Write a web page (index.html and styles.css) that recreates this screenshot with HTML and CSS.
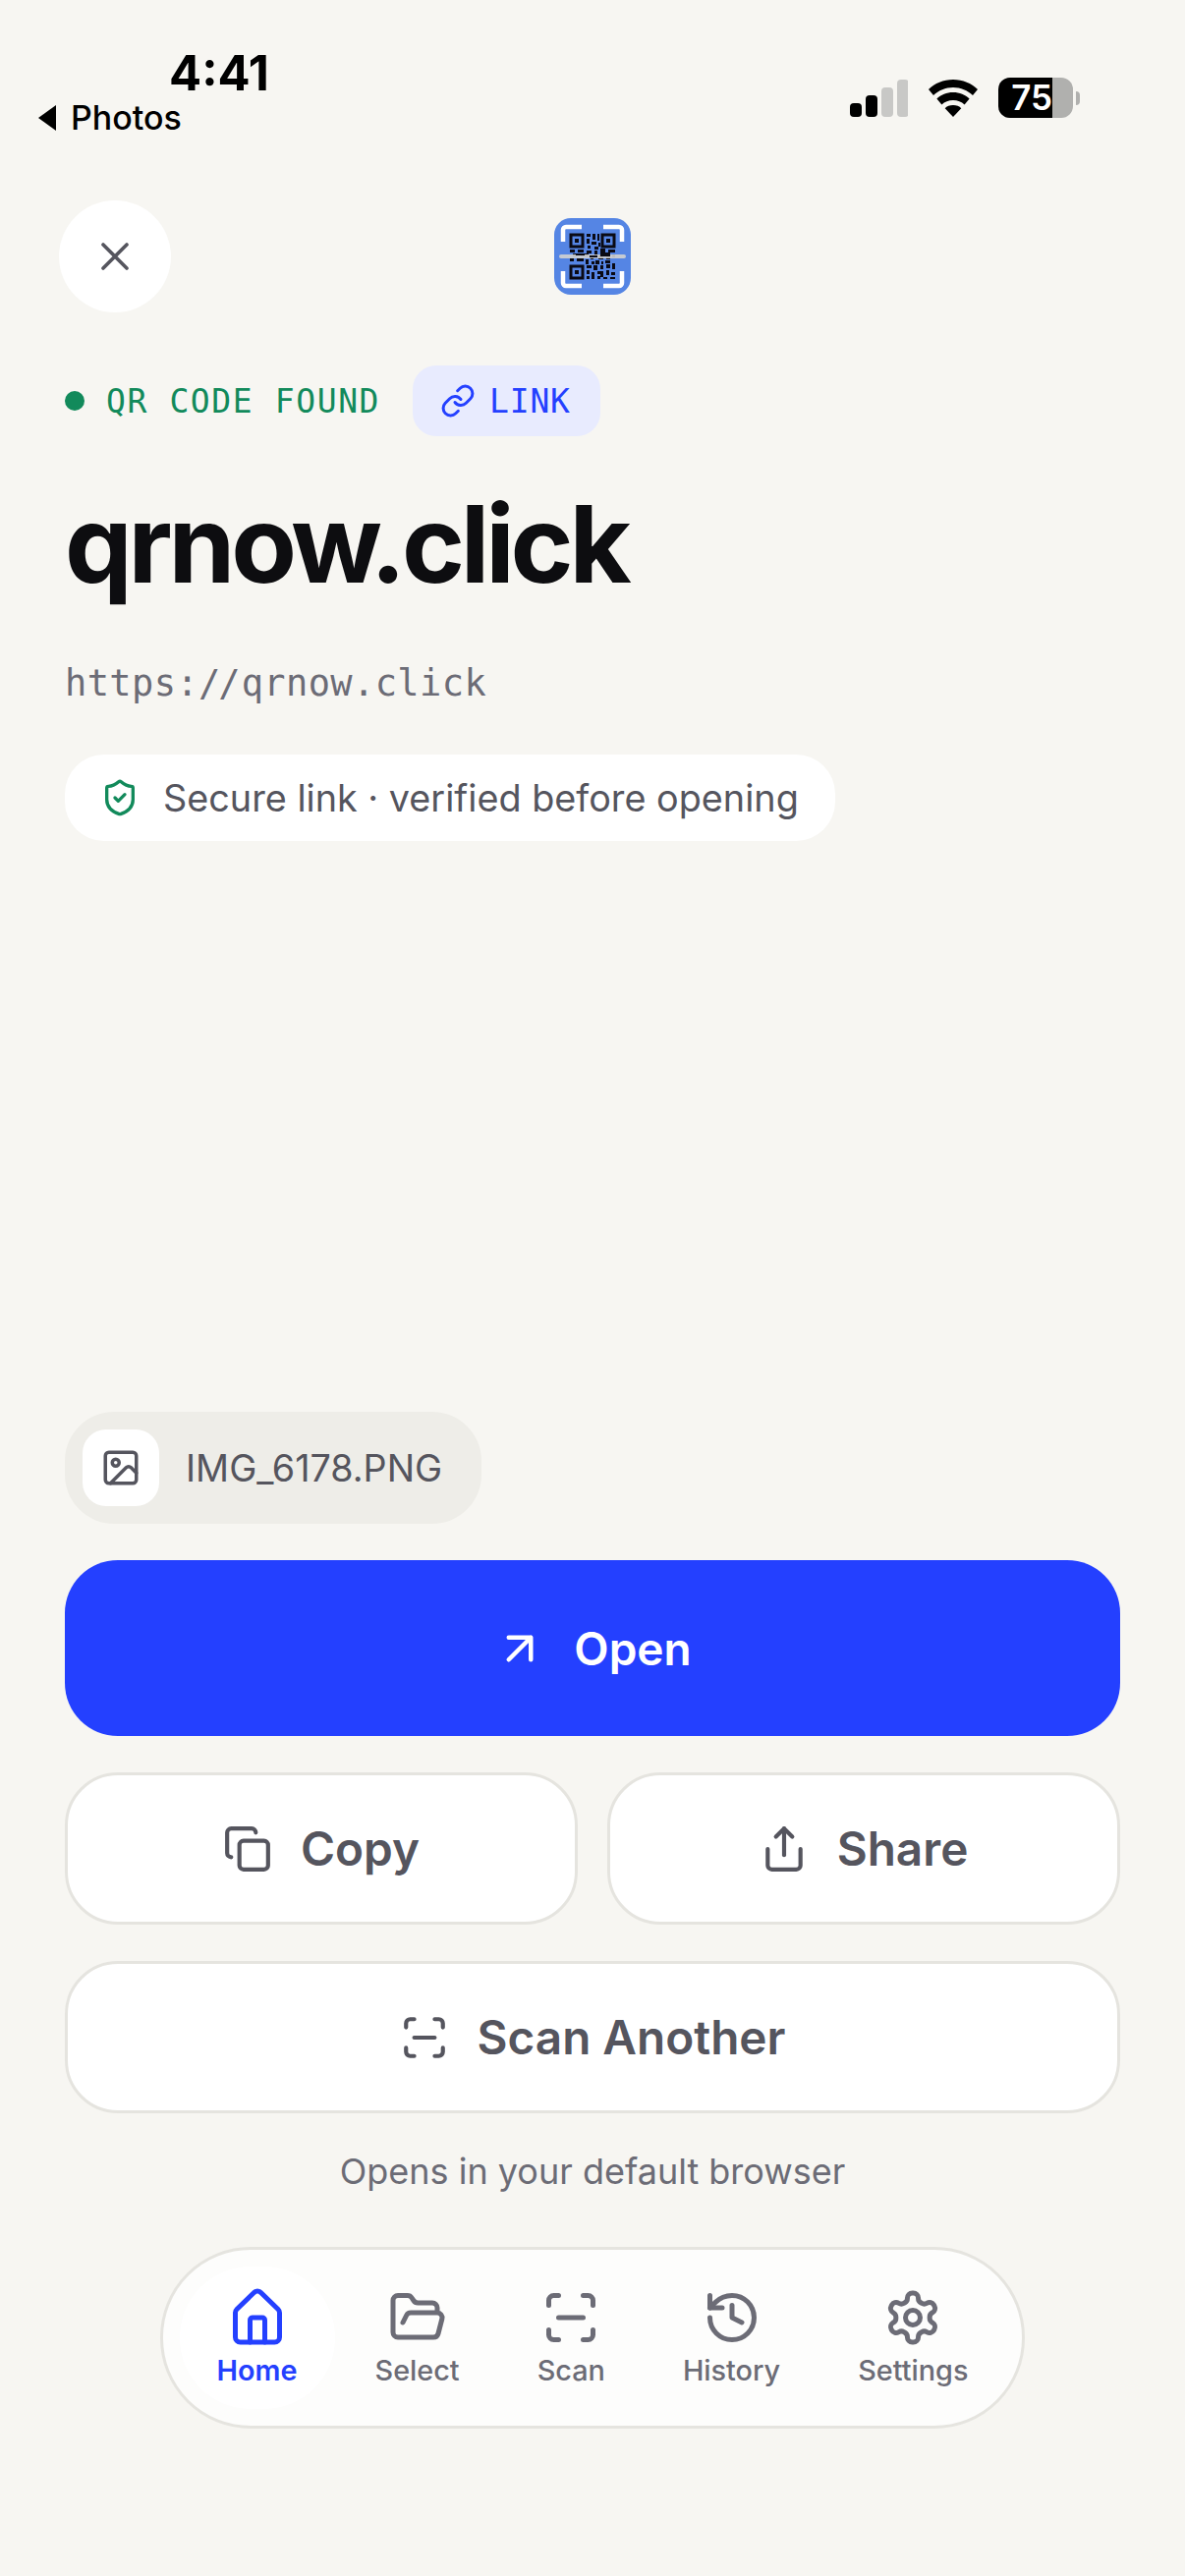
FILE: index.html
```html
<!DOCTYPE html>
<html lang="en">
<head>
<meta charset="utf-8">
<title>qrnow.click</title>
<link rel="stylesheet" href="styles.css">
</head>
<body>
<div class="page">
  <header class="status-bar">
    <div class="status-left">
      <div class="clock">4:41</div>
      <div class="back-app"><svg class="back-tri" viewBox="0 0 20 28"><path d="M19 1V27L1 14z"/></svg>Photos</div>
    </div>
    <div class="status-right">
      <svg class="signal" viewBox="0 0 60 38">
        <rect x="1" y="24" width="12" height="14" rx="4"/>
        <rect x="17" y="16" width="12" height="22" rx="4"/>
        <rect class="off" x="33" y="8" width="12" height="30" rx="4"/>
        <rect class="off" x="49" y="0" width="12" height="38" rx="4"/>
      </svg>
      <svg class="wifi" viewBox="0 0 52 38">
        <path d="M26 0C16 0 7.500 3.800 1 10l5 6c5.200-5 12.200-8 20-8s14.800 3 20 8l5-6C44.500 3.800 36 0 26 0z"/>
        <path d="M26 13c-6.600 0-12.400 2.500-16.600 6.500l5 6C17.400 22.500 21.500 21 26 21s8.600 1.500 11.600 4.500l5-6C38.400 15.500 32.600 13 26 13z"/>
        <path d="M26 26c-3.400 0-6.300 1.200-8.300 3.200L26 38l8.300-8.800C32.300 27.200 29.400 26 26 26z"/>
      </svg>
      <div class="battery">
        <div class="battery-body"><span class="battery-fill">75</span></div>
        <span class="battery-cap"></span>
      </div>
    </div>
  </header>

  <div class="top-row">
    <button class="close-btn" type="button">
      <svg class="ico ico-close" viewBox="0 0 24 24"><path d="M18 6 6 18M6 6l12 12"/></svg>
    </button>
    <svg class="app-logo" viewBox="0 0 78 78">
      <rect width="78" height="78" rx="17" fill="#5585e4"/>
      <g fill="none" stroke="#fff" stroke-width="4.500">
        <path d="M9 24V12a3 3 0 0 1 3-3h16M50 9h16a3 3 0 0 1 3 3v12M69 54v12a3 3 0 0 1-3 3H50M28 69H12a3 3 0 0 1-3-3V54"/>
      </g>
      <g fill="none" stroke="#0a0a14" stroke-width="3">
        <rect x="17" y="17" width="12" height="12"/>
        <rect x="49" y="17" width="12" height="12"/>
        <rect x="17" y="49" width="12" height="12"/>
      </g>
      <g fill="#0a0a14">
        <rect x="21" y="21" width="4" height="4"/><rect x="53" y="21" width="4" height="4"/><rect x="21" y="53" width="4" height="4"/>
        <path d="M33 16h4v3h-4zM39 16h3v6h-3zM44 16h2v7h-2zM33 21h3v5h-3zM38 24h5v3h-5zM45 25h2v4h-2zM34 28h3v3h-3zM41 29h4v3h-4zM16 32h5v3h-5zM24 32h6v3h-6zM33 33h5v3h-5zM41 33h3v5h-3zM47 31h5v4h-5zM55 32h7v3h-7zM19 36h4v3h-4zM27 36h8v3h-8zM37 38h3v4h-3zM45 37h5v5h-5zM53 36h4v6h-4zM59 37h3v3h-3zM16 41h4v3h-4zM23 41h7v3h-7zM32 42h3v5h-3zM38 44h3v3h-3zM42 43h4v4h-4zM48 44h2v3h-2zM52 43h5v3h-5zM33 48h5v3h-5zM40 48h4v5h-4zM47 48h3v4h-3zM53 47h4v4h-4zM59 46h3v6h-3zM33 53h3v4h-3zM38 55h3v7h-3zM44 54h6v3h-6zM53 53h3v5h-3zM58 55h4v3h-4zM44 59h3v3h-3zM50 60h4v2h-4zM57 60h5v2h-5zM33 59h3v3h-3zM47 57h3v3h-3z"/>
      </g>
      <rect x="5" y="37" width="68" height="4" rx="2" fill="#d2d2d0" opacity=".9"/>
      <path fill="#0a0a14" d="M22 36h9v2h-9zM36 38h8v2h-8zM47 35h10v4h-10z"/>
    </svg>
    <span></span>
  </div>

  <main class="result">
    <div class="badge-row">
      <span class="dot"></span>
      <span class="found">QR CODE FOUND</span>
      <span class="type-pill">
        <svg class="ico ico-link" viewBox="0 0 24 24"><path d="M10 13a5 5 0 0 0 7.540.54l3-3a5 5 0 0 0-7.070-7.070l-1.720 1.710"/><path d="M14 11a5 5 0 0 0-7.540-.54l-3 3a5 5 0 0 0 7.070 7.070l1.710-1.710"/></svg>
        LINK
      </span>
    </div>
    <h1 class="host">qrnow.click</h1>
    <div class="url">https:<span class="slashes">//</span>qrnow.click</div>
    <div class="secure">
      <svg class="ico ico-shield" viewBox="0 0 24 24"><path d="M20 13c0 5-3.500 7.500-7.660 8.950a1 1 0 0 1-.67-.01C7.500 20.500 4 18 4 13V6a1 1 0 0 1 1-1c2 0 4.500-1.200 6.240-2.720a1.170 1.170 0 0 1 1.520 0C14.510 3.810 17 5 19 5a1 1 0 0 1 1 1z"/><path d="m9 12 2 2 4-4"/></svg>
      Secure link · verified before opening
    </div>
  </main>

  <section class="actions">
    <div class="file-chip">
      <span class="file-thumb">
        <svg class="ico ico-image" viewBox="0 0 24 24"><rect x="3" y="3" width="18" height="18" rx="2"/><circle cx="9" cy="9" r="2"/><path d="m21 15-3.086-3.086a2 2 0 0 0-2.828 0L6 21"/></svg>
      </span>
      IMG_6178.PNG
    </div>
    <button class="btn btn-primary" type="button">
      <svg class="ico ico-open" viewBox="0 0 24 24"><path d="M7 7h10v10M7 17 17 7"/></svg>
      Open
    </button>
    <div class="btn-pair">
      <button class="btn btn-light" type="button">
        <svg class="ico ico-btn" viewBox="0 0 24 24"><rect x="8" y="8" width="14" height="14" rx="2"/><path d="M4 16c-1.100 0-2-.9-2-2V4c0-1.100.9-2 2-2h10c1.100 0 2 .9 2 2"/></svg>
        Copy
      </button>
      <button class="btn btn-light" type="button">
        <svg class="ico ico-btn" viewBox="0 0 24 24"><path d="M4 12v8a2 2 0 0 0 2 2h12a2 2 0 0 0 2-2v-8"/><path d="M16 6l-4-4-4 4"/><path d="M12 2v13"/></svg>
        Share
      </button>
    </div>
    <button class="btn btn-light" type="button">
      <svg class="ico ico-btn" viewBox="0 0 24 24"><path d="M3 7V5a2 2 0 0 1 2-2h2M17 3h2a2 2 0 0 1 2 2v2M21 17v2a2 2 0 0 1-2 2h-2M7 21H5a2 2 0 0 1-2-2v-2M7 12h10"/></svg>
      Scan Another
    </button>
    <p class="hint">Opens in your default browser</p>
  </section>

  <nav class="tabbar">
    <a class="tab tab-active">
      <svg class="ico ico-tab" viewBox="0 0 24 24"><path d="M3 10a2 2 0 0 1 .6-1.400l6.900-6.700a2 2 0 0 1 3 0l6.900 6.700A2 2 0 0 1 21 10v10a2 2 0 0 1-2 2H5a2 2 0 0 1-2-2z"/><path d="M15 22v-9a1 1 0 0 0-1-1h-4a1 1 0 0 0-1 1v9"/></svg>
      Home
    </a>
    <a class="tab">
      <svg class="ico ico-tab" viewBox="0 0 24 24"><path d="m6 14 1.450-2.900A2 2 0 0 1 9.240 10H20a2 2 0 0 1 1.940 2.500l-1.550 6a2 2 0 0 1-1.940 1.500H4a2 2 0 0 1-2-2V5c0-1.100.9-2 2-2h3.930a2 2 0 0 1 1.660.9l.82 1.200a2 2 0 0 0 1.660.9H18a2 2 0 0 1 2 2v2"/></svg>
      Select
    </a>
    <a class="tab">
      <svg class="ico ico-tab" viewBox="0 0 24 24"><path d="M3 7V5a2 2 0 0 1 2-2h2M17 3h2a2 2 0 0 1 2 2v2M21 17v2a2 2 0 0 1-2 2h-2M7 21H5a2 2 0 0 1-2-2v-2M7 12h10"/></svg>
      Scan
    </a>
    <a class="tab">
      <svg class="ico ico-tab" viewBox="0 0 24 24"><path d="M3 12a9 9 0 1 0 9-9 9.750 9.750 0 0 0-6.740 2.740L3 8"/><path d="M3 3v5h5"/><path d="M12 7v5l4 2"/></svg>
      History
    </a>
    <a class="tab">
      <svg class="ico ico-tab" viewBox="0 0 24 24"><path d="M12.220 2h-.44a2 2 0 0 0-2 2v.18a2 2 0 0 1-1 1.730l-.43.25a2 2 0 0 1-2 0l-.15-.08a2 2 0 0 0-2.730.73l-.22.38a2 2 0 0 0 .73 2.730l.15.1a2 2 0 0 1 1 1.720v.51a2 2 0 0 1-1 1.740l-.15.09a2 2 0 0 0-.73 2.730l.22.38a2 2 0 0 0 2.730.73l.15-.08a2 2 0 0 1 2 0l.43.25a2 2 0 0 1 1 1.730V20a2 2 0 0 0 2 2h.44a2 2 0 0 0 2-2v-.18a2 2 0 0 1 1-1.730l.43-.25a2 2 0 0 1 2 0l.15.08a2 2 0 0 0 2.730-.73l.22-.39a2 2 0 0 0-.73-2.730l-.15-.08a2 2 0 0 1-1-1.740v-.5a2 2 0 0 1 1-1.740l.15-.09a2 2 0 0 0 .73-2.730l-.22-.38a2 2 0 0 0-2.730-.73l-.15.08a2 2 0 0 1-2 0l-.43-.25a2 2 0 0 1-1-1.730V4a2 2 0 0 0-2-2z"/><circle cx="12" cy="12" r="3"/></svg>
      Settings
    </a>
  </nav>
</div>
</body>
</html>
```
FILE: styles.css
```css
* { box-sizing: border-box; }

html, body { margin: 0; padding: 0; }

body {
  background: #f7f6f2;
  font-family: Inter, "Liberation Sans", sans-serif;
  color: #55555e;
}

.page {
  width: 1206px;
  height: 2622px;
  display: flex;
  flex-direction: column;
  overflow: hidden;
}

.ico {
  display: block;
  flex: none;
  fill: none;
  stroke: currentColor;
  stroke-width: 2;
  stroke-linecap: round;
  stroke-linejoin: round;
}

/* System status bar */
.status-bar {
  height: 204px;
  padding: 48px 107px 0 38px;
  display: flex;
  justify-content: space-between;
  align-items: flex-start;
  color: #000;
}

.clock {
  margin-left: 134px;
  font-size: 49px;
  font-weight: 700;
  line-height: 54px;
}

.back-app {
  display: flex;
  align-items: center;
  gap: 14px;
  font-size: 34px;
  font-weight: 500;
  line-height: 36px;
}

.back-tri { width: 20px; height: 28px; fill: #000; }

.status-right {
  display: flex;
  align-items: center;
  gap: 20px;
  margin-top: 31px;
}

.signal { width: 60px; height: 38px; fill: #000; display: block; }
.signal .off { fill: #c8c8c6; }
.wifi { width: 52px; height: 38px; fill: #000; display: block; }

.battery { display: flex; align-items: center; gap: 3px; }

.battery-body {
  width: 76px;
  height: 41px;
  border-radius: 12px;
  background: #b0b0ae;
  overflow: hidden;
}

.battery-fill {
  display: block;
  width: 55px;
  height: 100%;
  background: #000;
  color: #fff;
  font-size: 35px;
  font-weight: 600;
  line-height: 41px;
  text-align: right;
  white-space: nowrap;
}

.battery-cap {
  width: 4px;
  height: 14px;
  border-radius: 0 4px 4px 0;
  background: #b0b0ae;
}

/* Close button and app mark */
.top-row {
  display: grid;
  grid-template-columns: 1fr auto 1fr;
  align-items: center;
  padding: 0 60px;
  height: 114px;
}

.close-btn {
  width: 114px;
  height: 114px;
  border: 0;
  border-radius: 50%;
  background: #fff;
  color: #55555e;
  display: flex;
  align-items: center;
  justify-content: center;
  padding: 0;
}

.ico-close { width: 48px; height: 48px; stroke-width: 1.800; }
.app-logo { width: 78px; height: 78px; display: block; }

/* Scan result */
.result {
  flex: 1;
  padding: 54px 66px 0;
  display: flex;
  flex-direction: column;
  align-items: flex-start;
}

.badge-row { display: flex; align-items: center; height: 72px; }

.dot {
  width: 20px;
  height: 20px;
  border-radius: 50%;
  background: #128a5b;
  margin-right: 22px;
}

.found {
  font-family: "DejaVu Sans Mono", "Liberation Mono", monospace;
  font-size: 33px;
  letter-spacing: 1.600px;
  color: #128a5b;
  white-space: nowrap;
}

.type-pill {
  margin-left: 33px;
  height: 72px;
  padding: 0 30px 0 28px;
  border-radius: 24px;
  background: #e8ebfe;
  color: #2440ff;
  display: flex;
  align-items: center;
  gap: 14px;
  font-family: "DejaVu Sans Mono", "Liberation Mono", monospace;
  font-size: 33px;
  letter-spacing: 0.800px;
}

.ico-link { width: 36px; height: 36px; }

.host {
  margin: 44px 0 0;
  font-size: 109px;
  font-weight: 700;
  line-height: 130px;
  letter-spacing: -4.200px;
  color: #0d0d10;
}

.url {
  margin-top: 54px;
  font-family: "DejaVu Sans Mono", "Liberation Mono", monospace;
  font-size: 37px;
  letter-spacing: 0.400px;
  line-height: 48px;
  color: #6c6c76;
  white-space: nowrap;
}

.slashes { letter-spacing: -2px; margin-right: 3px; }

.secure {
  margin-top: 48px;
  height: 88px;
  padding: 0 37px 0 36px;
  border-radius: 40px;
  background: #fff;
  display: flex;
  align-items: center;
  gap: 24px;
  font-size: 37.770px;
  white-space: nowrap;
  color: #55555e;
}

.ico-shield { width: 40px; height: 40px; color: #128a5b; }

/* Action buttons */
.actions {
  padding: 0 66px;
  display: flex;
  flex-direction: column;
  align-items: stretch;
}

.file-chip {
  align-self: flex-start;
  height: 114px;
  padding: 0 40px 0 18px;
  border-radius: 50px;
  background: #eeede8;
  display: flex;
  align-items: center;
  gap: 27px;
  font-size: 37.700px;
  color: #55555e;
}

.file-thumb {
  width: 78px;
  height: 78px;
  border-radius: 24px;
  background: #fff;
  display: flex;
  align-items: center;
  justify-content: center;
}

.ico-image { width: 42px; height: 42px; }

.btn {
  font-family: inherit;
  display: flex;
  align-items: center;
  justify-content: center;
  padding: 0;
  border-radius: 54px;
}

.btn-primary {
  margin-top: 37px;
  height: 179px;
  border: 0;
  background: #2440ff;
  color: #fff;
  gap: 28px;
  font-size: 46px;
  font-weight: 600;
  line-height: 54px;
}

.ico-open { width: 54px; height: 54px; }

.btn-light {
  height: 155px;
  flex: 1;
  flex-basis: 155px;
  border: 3px solid #e5e4df;
  background: #fff;
  color: #55555e;
  gap: 29px;
  font-size: 47.700px;
  font-weight: 600;
}

.actions > .btn-light { flex: none; margin-top: 37px; }

.btn-pair { display: flex; gap: 30px; margin-top: 37px; }

.ico-btn { width: 50px; height: 50px; }

.hint {
  margin: 37px 0 0;
  font-size: 36px;
  line-height: 44px;
  text-align: center;
  color: #6c6c76;
}

/* Floating tab bar */
.tabbar {
  align-self: center;
  margin: 55px 0 150px;
  height: 185px;
  padding: 0 17px;
  border: 3px solid #e5e4df;
  border-radius: 92px;
  background: #fdfdfc;
  display: flex;
  align-items: center;
  gap: 3px;
}

.tab {
  height: 145px;
  padding: 0 38px;
  border-radius: 72px;
  display: flex;
  flex-direction: column;
  align-items: center;
  justify-content: center;
  gap: 6px;
  font-size: 28.800px;
  font-weight: 500;
  color: #6c6c76;
}

.tab-active { background: #fff; color: #2440ff; font-weight: 600; }

.ico-tab { width: 60px; height: 60px; }
```
